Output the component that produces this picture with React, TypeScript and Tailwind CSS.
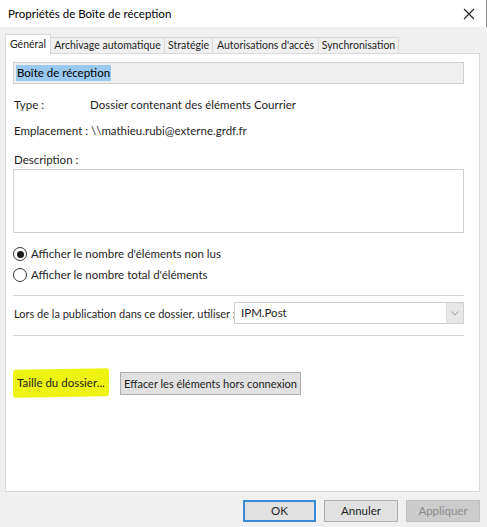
import { useState } from "react";

const tabs = [
  { label: "Général", w: "w-[46px]" },
  { label: "Archivage automatique", w: "w-[114px]" },
  { label: "Stratégie", w: "w-[48px]" },
  { label: "Autorisations d'accès", w: "w-[106px]" },
  { label: "Synchronisation", w: "w-[80px]" },
];

const Radio = ({ checked, label }: { checked: boolean; label: string }) => {
  return (
    <div className="flex items-center gap-[4px] h-[20px]">
      <span className="w-[14px] h-[14px] rounded-full border border-[#333] bg-white flex items-center justify-center">
        {checked && <span className="w-[7px] h-[7px] rounded-full bg-[#1a1a1a]" />}
      </span>
      <span>{label}</span>
    </div>
  );
};

export default function App() {
  const [active] = useState(0);

  return (
    <div className="w-[487px] h-[527px] bg-[#f0f0f0] overflow-hidden text-[11.5px] text-[#1e1e1e] flex flex-col font-['Lato',sans-serif] leading-none whitespace-nowrap">
      {/* title bar */}
      <div className="h-[27px] bg-white flex items-center justify-between pl-[8px] pr-[11px] border-r border-[#8c8c8c] shrink-0">
        <span className="text-[11.5px] text-black">Propriétés de Boîte de réception</span>
        <svg width="12" height="12" viewBox="0 0 12 12">
          <path d="M1 1 L11 11 M11 1 L1 11" stroke="#222" strokeWidth="1.1" />
        </svg>
      </div>

      {/* tabs */}
      <div className="flex items-end pl-[5px] pt-[7px] shrink-0 relative z-10 text-[10.5px]">
        {tabs.map((t, i) =>
          i === active ? (
            <div
              key={t.label}
              className={`${t.w} h-[20px] bg-white border border-b-0 border-[#d9d9d9] flex items-center justify-center -mb-px`}
            >
              {t.label}
            </div>
          ) : (
            <div
              key={t.label}
              className={`${t.w} h-[16px] bg-[#f0f0f0] border border-l-0 border-b-0 border-[#d9d9d9] flex items-center justify-center`}
            >
              {t.label}
            </div>
          )
        )}
      </div>

      {/* panel */}
      <div className="mx-[5px] mr-[7px] h-[439px] bg-white border border-[#d9d9d9] px-[7px] pt-[8px] flex flex-col shrink-0">
        <div className="w-[451px] h-[22px] bg-[#efefef] border border-[#cfcfcf] flex items-center pl-[2px]">
          <span className="bg-[#99c9ef] text-black px-[1px] h-[16px] flex items-center">Boîte de réception</span>
        </div>

        <div className="flex mt-[14px] h-[14px] items-center pl-[1px]">
          <span className="w-[76px]">Type :</span>
          <span>Dossier contenant des éléments Courrier</span>
        </div>
        <div className="flex mt-[12px] h-[14px] items-center pl-[1px]">
          <span className="w-[77px]">Emplacement :</span>
          <span>\\mathieu.rubi@externe.grdf.fr</span>
        </div>

        <div className="mt-[15px] h-[14px] flex items-center pl-[1px]">Description :</div>
        <div className="mt-[2px] w-[451px] h-[64px] border border-[#d0d0d0] bg-white" />

        <div className="mt-[11px] flex flex-col gap-[1px]">
          <Radio checked label="Afficher le nombre d'éléments non lus" />
          <Radio checked={false} label="Afficher le nombre total d'éléments" />
        </div>

        <div className="mt-[10px] w-[451px] h-px bg-[#d7d7d7]" />

        <div className="mt-[6px] flex items-center h-[22px]">
          <span className="w-[221px] pl-[1px] text-[11px]">Lors de la publication dans ce dossier, utiliser :</span>
          <div className="w-[230px] h-[22px] border border-[#cfcfcf] flex items-center justify-between">
            <span className="pl-[6px]">IPM.Post</span>
            <span className="w-[17px] h-[20px] bg-[#e6e6e6] border-l border-[#dcdcdc] flex items-center justify-center">
              <svg width="8" height="5" viewBox="0 0 8 5">
                <path d="M0.5 0.5 L4 4 L7.5 0.5" stroke="#9a9a9a" strokeWidth="1" fill="none" />
              </svg>
            </span>
          </div>
        </div>

        <div className="mt-[11px] w-[451px] h-px bg-[#d7d7d7]" />

        <div className="mt-[33px] flex items-center gap-[11px]">
          <div className="w-[96px] h-[28px] bg-[#eef312] rounded-[3px] -skew-y-1 flex items-center justify-center">
            <span className="skew-y-1">Taille du dossier...</span>
          </div>
          <div className="w-[181px] h-[23px] bg-[#e1e1e1] border border-[#adadad] flex items-center justify-center text-[11px]">
            Effacer les éléments hors connexion
          </div>
        </div>
      </div>

      {/* footer */}
      <div className="flex justify-end gap-[8px] pr-[7px] mt-[8px]">
        <div className="w-[73px] h-[22px] bg-[#e1e1e1] border-2 border-[#3c8ad6] flex items-center justify-center">OK</div>
        <div className="w-[74px] h-[22px] bg-[#e1e1e1] border border-[#adadad] flex items-center justify-center">Annuler</div>
        <div className="w-[74px] h-[22px] bg-[#cccccc] border border-[#bfbfbf] text-[#8a8a8a] flex items-center justify-center">Appliquer</div>
      </div>
    </div>
  );
}
